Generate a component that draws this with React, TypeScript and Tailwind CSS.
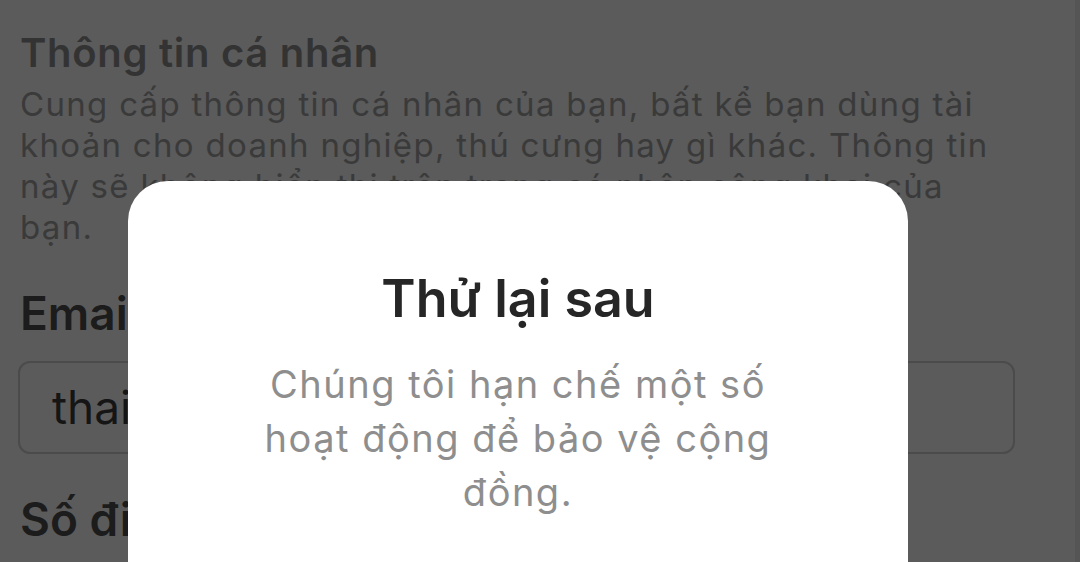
import React from 'react';

const font = { fontFamily: 'Inter, "Noto Sans", sans-serif' };

function ProfileForm() {
  return (
    <div className="flex flex-col px-5 pt-[29px]">
      <h2 className="text-[40px] leading-[48px] font-semibold tracking-[0.7px] text-[#333333]">Thông tin cá nhân</h2>
      <p className="mt-[7px] text-[33px] leading-[41px] tracking-[1.3px] text-[#3a3a3a]">
        Cung cấp thông tin cá nhân của bạn, bất kể bạn dùng tài
        <br />
        khoản cho doanh nghiệp, thú cưng hay gì khác. Thông tin
        <br />
        này sẽ không hiển thị trên trang cá nhân công khai của
        <br />
        bạn.
      </p>
      <label className="mt-[37px] text-[46px] leading-[56px] font-semibold text-[#1c1c1c]">Email</label>
      <div className="-ml-[2px] mt-[20px] flex h-[93px] w-[997px] items-center rounded-[12px] border-2 border-[#4b4b4b] px-8">
        <span className="text-[46px] text-[#151515]">thainguyen@gmail.com</span>
      </div>
      <label className="mt-[37px] text-[46px] leading-[56px] font-semibold text-[#1c1c1c]">Số điện thoại</label>
    </div>
  );
}

function RateLimitDialog() {
  return (
    <div className="absolute left-[128px] top-[181px] h-[420px] w-[780px] rounded-[40px] bg-white">
      <div className="flex flex-col items-center pt-[87px]">
        <h1 className="text-[52px] leading-[62px] font-semibold text-[#262626]">Thử lại sau</h1>
        <p className="mt-[27px] text-center text-[38px] leading-[54px] tracking-[1.5px] text-[#8e8e8e]">
          Chúng tôi hạn chế một số
          <br />
          hoạt động để bảo vệ cộng
          <br />
          đồng.
        </p>
      </div>
    </div>
  );
}

export default function App() {
  return (
    <div className="relative h-[562px] w-[1080px] overflow-hidden bg-[#5b5b5b]" style={font}>
      <ProfileForm />
      {/* dim strip at the right edge */}
      <div className="absolute right-0 top-0 h-full w-[5px] bg-[#555555]" />
      <RateLimitDialog />
    </div>
  );
}
